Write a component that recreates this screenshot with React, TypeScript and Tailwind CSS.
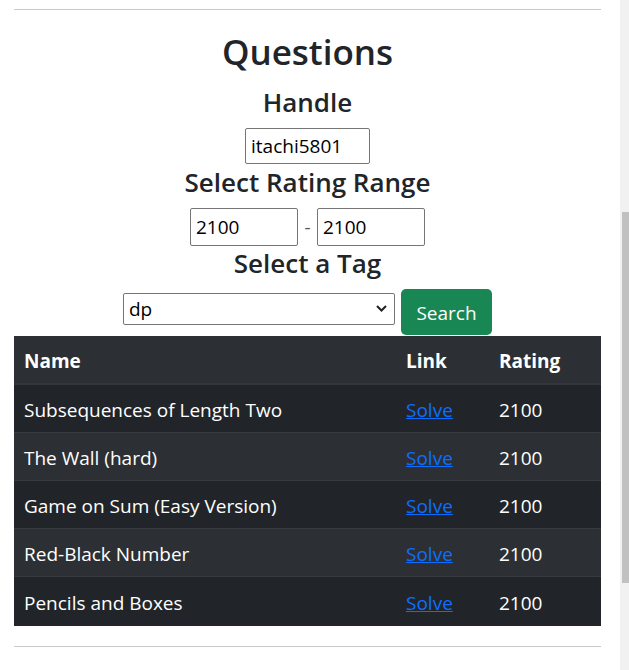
import React, { useState } from "react";

interface IProblem {
  name: string;
  rating: number;
}

const problems: IProblem[] = [
  { name: "Subsequences of Length Two", rating: 2100 },
  { name: "The Wall (hard)", rating: 2100 },
  { name: "Game on Sum (Easy Version)", rating: 2100 },
  { name: "Red-Black Number", rating: 2100 },
  { name: "Pencils and Boxes", rating: 2100 },
];

const font = { fontFamily: '"Open Sans", "Noto Sans", sans-serif' };

const App: React.FC = () => {
  const [handle, setHandle] = useState("itachi5801");
  const [minRating, setMinRating] = useState("2100");
  const [maxRating, setMaxRating] = useState("2100");
  const [tag, setTag] = useState("dp");

  return (
    <div className="flex w-[629px] h-[670px] overflow-hidden bg-white text-[#212529]" style={font}>
      <div className="w-[620px] pl-[14px] pr-[19px]">
        <hr className="mt-[9px] border-t border-[#c8c9ca]" />

        <div className="flex flex-col items-center">
          <h1 className="mt-[20px] text-[35px] leading-[44px] font-semibold">Questions</h1>
          <h2 className="mt-[12px] text-[26px] leading-[32px] font-semibold">Handle</h2>
          <input
            type="text"
            value={handle}
            onChange={(e) => setHandle(e.target.value)}
            className="mt-[10px] w-[125px] h-[36px] px-[5px] border border-[#767676] rounded-[2px] text-[19px] text-black outline-none"
          />
          <h2 className="mt-[2px] text-[26px] leading-[32px] font-semibold">Select Rating Range</h2>
          <div className="mt-[10px] flex items-center">
            <input
              type="text"
              value={minRating}
              onChange={(e) => setMinRating(e.target.value)}
              className="w-[108px] h-[38px] px-[5px] border border-[#767676] rounded-[2px] text-[19px] text-black outline-none"
            />
            <span className="w-[19px] text-center text-[19px] text-[#555]">-</span>
            <input
              type="text"
              value={maxRating}
              onChange={(e) => setMaxRating(e.target.value)}
              className="w-[108px] h-[38px] px-[5px] border border-[#767676] rounded-[2px] text-[19px] text-black outline-none"
            />
          </div>
          <h2 className="mt-[1px] text-[26px] leading-[32px] font-semibold">Select a Tag</h2>
          <div className="mt-[10px] flex items-start gap-[6px]">
            <div className="relative mt-[4px]">
              <select
                value={tag}
                onChange={(e) => setTag(e.target.value)}
                className="appearance-none w-[272px] h-[32px] pl-[5px] border border-[#767676] rounded-[2px] text-[19px] text-black bg-white outline-none"
              >
                <option value="dp">dp</option>
                <option value="greedy">greedy</option>
                <option value="math">math</option>
              </select>
              <svg
                className="absolute right-[8px] top-[12px] pointer-events-none"
                width="11"
                height="7"
                viewBox="0 0 11 7"
                fill="none"
                stroke="#222"
                strokeWidth="2"
              >
                <path d="M1 1l4.5 4.5L10 1" />
              </svg>
            </div>
            <button className="w-[91px] h-[46px] pt-[3px] rounded-[5px] bg-[#198754] text-white text-[19px]">Search</button>
          </div>
        </div>

        <table className="mt-[1px] w-full border-collapse text-white text-[19px] text-left">
          <thead>
            <tr className="h-[48px] bg-[#2c3034] border-b-2 border-[#33373b]">
              <th className="w-[382px] pl-[10px] pt-[4px] font-bold">Name</th>
              <th className="w-[93px] pl-[10px] pt-[4px] font-bold">Link</th>
              <th className="pl-[10px] pt-[4px] font-bold">Rating</th>
            </tr>
          </thead>
          <tbody>
            {problems.map((p, i) => (
              <tr
                key={p.name}
                className={`h-[48px] border-t border-[#373b3e] ${i % 2 === 0 ? "bg-[#212529]" : "bg-[#2c3034]"} ${i === problems.length - 1 ? "h-[50px]" : ""}`}
              >
                <td className="pl-[10px] pt-[4px]">{p.name}</td>
                <td className="pl-[10px] pt-[4px]">
                  <a href="#" className="text-[#0d6efd] underline">
                    Solve
                  </a>
                </td>
                <td className="pl-[10px] pt-[4px]">{p.rating}</td>
              </tr>
            ))}
          </tbody>
        </table>

        <hr className="mt-[20px] border-t border-[#c8c9ca]" />
      </div>

      {/* fake scrollbar */}
      <div className="w-[9px] h-full bg-[#f1f1f1] pl-[2px] pt-[212px]">
        <div className="w-[7px] h-[371px] bg-[#c1c1c1]" />
      </div>
    </div>
  );
};

export default App;
